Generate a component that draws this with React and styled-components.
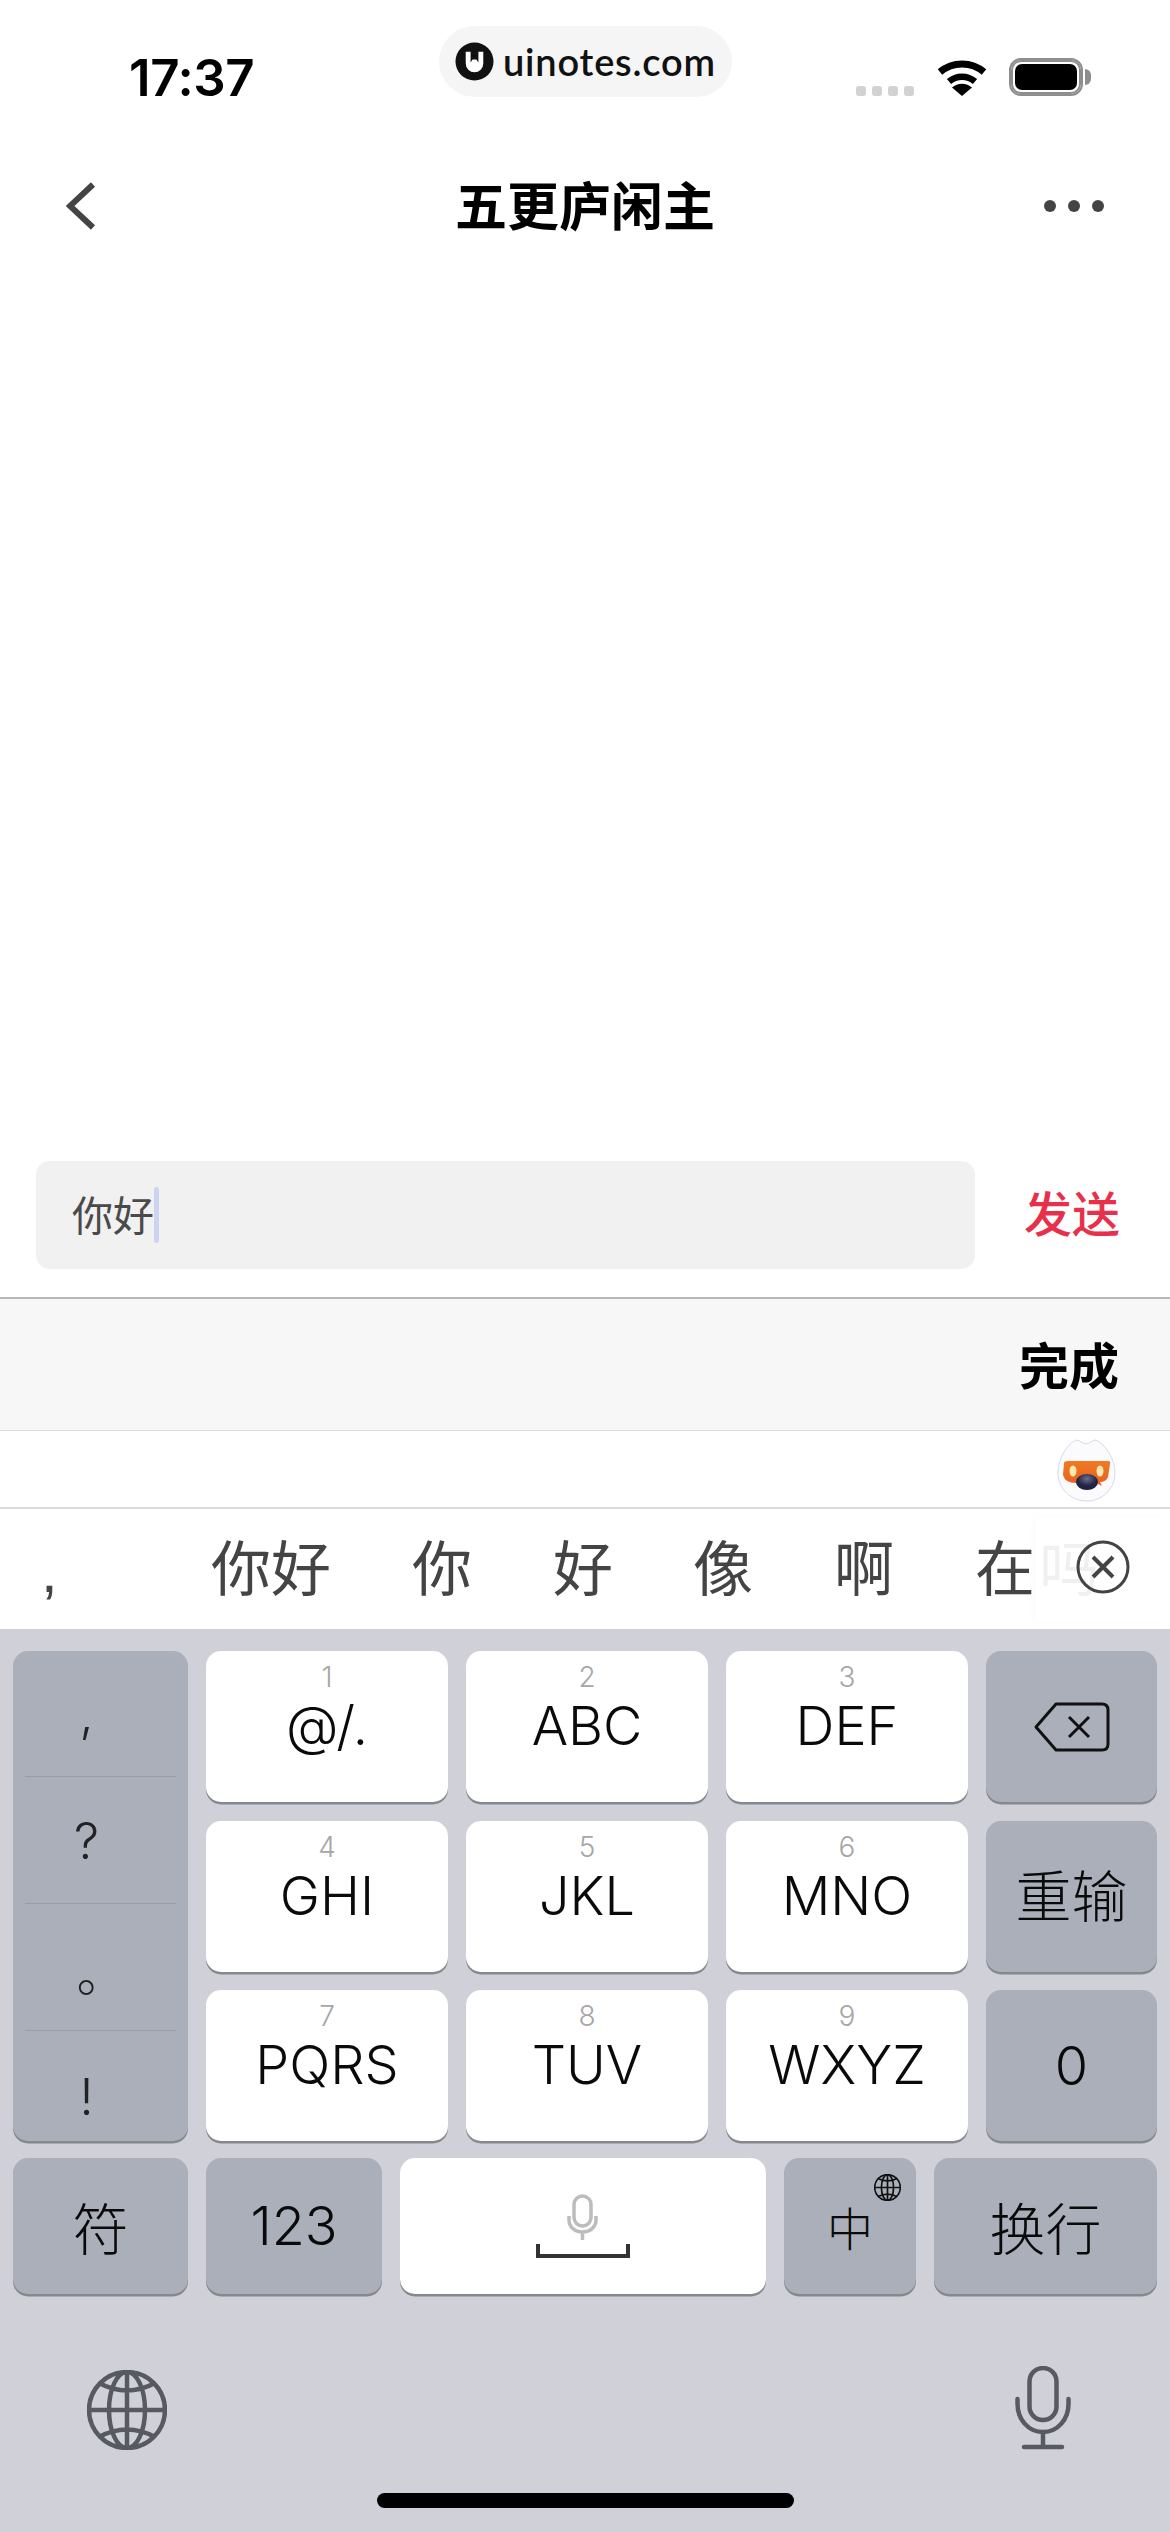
import React from "react";
import styled, { createGlobalStyle } from "styled-components";

const CJK = `"Noto Sans CJK SC", "Noto Sans", sans-serif`;
const LATIN = `Inter, "Noto Sans CJK SC", sans-serif`;

const Global = createGlobalStyle`
  html, body { margin: 0; padding: 0; background: #fff; }
  * { box-sizing: border-box; }
`;

const Page = styled.div`
  position: relative;
  width: 1170px;
  height: 2532px;
  display: flex;
  flex-direction: column;
  overflow: hidden;
  background: #fff;
  font-family: ${CJK};
`;

const StatusBar = styled.div`
  height: 150px;
  padding: 44px 87px 0 129px;
  display: flex;
  justify-content: space-between;
  align-items: flex-start;
  flex-shrink: 0;
`;
const Clock = styled.div`
  font: 600 51px/56px Inter, sans-serif;
  letter-spacing: -0.4px;
  color: #000;
  margin-top: 6px;
`;
const StatusIcons = styled.div`
  display: flex;
  align-items: flex-end;
  margin-top: 14px;
  height: 38px;
`;
const SignalDots = styled.div`
  display: flex;
  gap: 6px;
  margin-right: 23px;
`;
const SignalDot = styled.span`
  width: 10px;
  height: 10px;
  border-radius: 3px;
  background: #d2d2d2;
`;
const Battery = styled.div`
  position: relative;
  width: 74px;
  height: 38px;
  margin-left: 22px;
  padding: 4px;
  border: 2px solid #8e8e8e;
  border-radius: 12px;
  box-shadow: inset 0 0 0 2px #8e8e8e;
  &::after {
    content: "";
    position: absolute;
    right: -10px;
    top: 9px;
    width: 6px;
    height: 16px;
    border-radius: 0 6px 6px 0;
    background: #8e8e8e;
  }
`;
const BatteryFill = styled.div`
  width: 100%;
  height: 100%;
  border-radius: 7px;
  background: #000;
`;
const Watermark = styled.div`
  position: absolute;
  left: 439px;
  top: 26px;
  width: 293px;
  height: 71px;
  padding-left: 16px;
  display: flex;
  align-items: center;
  gap: 9px;
  border-radius: 36px;
  background: #f5f5f5;
`;
const WatermarkText = styled.span`
  font: 600 38px/1 Lato, sans-serif;
  color: #111;
  letter-spacing: 0.8px;
  margin-top: -2px;
`;

const Nav = styled.div`
  position: relative;
  height: 112px;
  padding: 0 66px;
  display: flex;
  align-items: center;
  justify-content: space-between;
  flex-shrink: 0;
`;
const Title = styled.div`
  position: absolute;
  left: 0;
  right: 0;
  top: 24px;
  text-align: center;
  font-size: 52px;
  font-weight: 700;
  line-height: 60px;
  color: #000;
`;
const MoreDots = styled.div`
  display: flex;
  gap: 12px;
`;
const MoreDot = styled.span`
  width: 12px;
  height: 12px;
  border-radius: 50%;
  background: #444;
`;

const Spacer = styled.div`
  flex: 1;
`;

const Composer = styled.div`
  height: 136px;
  padding: 0 50px 28px 36px;
  display: flex;
  align-items: stretch;
  justify-content: space-between;
  flex-shrink: 0;
`;
const InputBox = styled.div`
  width: 939px;
  padding-left: 36px;
  display: flex;
  align-items: center;
  border-radius: 14px;
  background: #f1f1f1;
  font-size: 41px;
  line-height: 56px;
  color: #4a4a4a;
`;
const InputText = styled.span`
  margin-top: -4px;
`;
const Caret = styled.span`
  width: 5px;
  height: 56px;
  border-radius: 3px;
  background: #ccd4f2;
`;
const Send = styled.div`
  align-self: center;
  margin-top: -8px;
  font-size: 48px;
  font-weight: 500;
  line-height: 56px;
  color: #e8304a;
`;
const DoneBar = styled.div`
  height: 134px;
  padding: 0 51px 4px 0;
  display: flex;
  align-items: center;
  justify-content: flex-end;
  border-top: 2px solid #b8b8b8;
  border-bottom: 1px solid #dcdcdc;
  background: #f7f7f7;
  font-size: 50px;
  font-weight: 700;
  color: #000;
  flex-shrink: 0;
`;
const MascotStrip = styled.div`
  height: 78px;
  display: flex;
  justify-content: flex-end;
  align-items: flex-start;
  padding: 8px 54px 0 0;
  border-bottom: 2px solid #dcdcdc;
  flex-shrink: 0;
`;
const Candidates = styled.div`
  position: relative;
  height: 120px;
  padding: 0 0 8px 41px;
  display: flex;
  align-items: center;
  flex-shrink: 0;
  font-size: 60px;
  color: #444;
  overflow: hidden;
`;
const Comma = styled.span`
  flex: none;
  width: 170px;
  font: 400 60px/60px "Liberation Sans", sans-serif;
  margin-top: 14px;
`;
const Candidate = styled.span`
  flex: none;
  margin-right: ${(p) => p.$gap}px;
  line-height: 70px;
  white-space: nowrap;
`;
const FadeCover = styled.div`
  position: absolute;
  left: 1036px;
  top: 8px;
  bottom: 8px;
  right: 0;
  background: rgba(255, 255, 255, 0.92);
  box-shadow: -3px 0 6px rgba(0, 0, 0, 0.02);
`;
const ClearIcon = styled.svg`
  position: absolute;
  left: 1076px;
  top: 31px;
`;

const Keyboard = styled.div`
  height: 903px;
  flex-shrink: 0;
  padding: 22px 13px 0;
  background: #d0d1d8;
  display: flex;
  flex-direction: column;
  position: relative;
`;
const KeyGrid = styled.div`
  display: grid;
  grid-template-columns: 175px 242px 242px 242px 171px;
  grid-template-rows: repeat(3, 151px);
  column-gap: 18px;
  row-gap: 18.5px;
`;
const Key = styled.div`
  position: relative;
  display: flex;
  flex-direction: column;
  align-items: center;
  justify-content: center;
  border-radius: 15px;
  background: ${(p) => (p.$light ? "#fff" : "#aaafb9")};
  box-shadow: 0 2.5px 0 #85888c;
  color: #0a0a0a;
  font-family: ${LATIN};
  font-weight: 300;
  font-size: ${(p) => p.$size || 54}px;
  line-height: 1;
`;
const KeyNumber = styled.span`
  position: absolute;
  top: 9px;
  left: 0;
  right: 0;
  text-align: center;
  font-size: 28px;
  line-height: 34px;
  color: #a6a6a6;
`;
const KeyLabel = styled.span`
  position: absolute;
  top: 42px;
  left: 0;
  right: 0;
  text-align: center;
  font-size: 54px;
  line-height: 66px;
`;
const PunctColumn = styled(Key)`
  grid-row: 1 / span 3;
  justify-content: flex-start;
  padding: 0 12px;
`;
const PunctCell = styled.div`
  flex: none;
  width: 100%;
  height: ${(p) => p.$h}px;
  display: flex;
  justify-content: center;
  align-items: center;
  padding: ${(p) => p.$pad || 0}px 28px 0 0;
  border-bottom: ${(p) => (p.$last ? "none" : "1.5px solid #989da7")};
  font-size: 50px;
  color: #222;
`;
const PeriodGlyph = styled.span`
  font-family: ${CJK};
  transform: translate(15px, 3px);
`;
const Row4 = styled.div`
  display: flex;
  gap: 18px;
  margin-top: 17px;
  height: 136px;
`;
const BottomKey = styled(Key)`
  flex: none;
  width: ${(p) => p.$w}px;
`;
const CjkText = styled.span`
  font-family: ${CJK};
  font-weight: 300;
  font-size: ${(p) => p.$size || 56}px;
  line-height: 66px;
  margin-top: ${(p) => p.$shift || 0}px;
`;
const SmallGlobe = styled.svg`
  position: absolute;
  right: 15px;
  top: 16px;
`;
const SpaceIcon = styled.svg`
  position: absolute;
  left: 136px;
  top: 36px;
`;
const BottomIcons = styled.div`
  margin-top: 72px;
  padding: 0 86px 0 74px;
  display: flex;
  justify-content: space-between;
  align-items: flex-end;
`;
const HomeBar = styled.div`
  position: absolute;
  left: 377px;
  bottom: 24px;
  width: 417px;
  height: 15px;
  border-radius: 8px;
  background: #000;
`;

const Logo = () => (
  <svg width="39" height="39" viewBox="-20 -20 40 40">
    <circle r="19.5" fill="#111" />
    <path d="M-9-10h5V1l2-3h4l2 3v-11h5V2a9 9 0 0 1-18 0z" fill="#fff" />
  </svg>
);
const Wifi = () => (
  <svg width="50" height="38" viewBox="0 0 50 38">
    <path d="M3 14A34 34 0 0 1 47 14" fill="none" stroke="#000" strokeWidth="7" />
    <path d="M12 23.5A20 20 0 0 1 38 23.5" fill="none" stroke="#000" strokeWidth="6.5" />
    <path d="M25 38L15 29.5A15 15 0 0 1 35 29.5Z" fill="#000" />
  </svg>
);
const Back = () => (
  <svg width="30" height="48" viewBox="0 0 30 48">
    <path d="M27 2.5L4 24L27 45.5" fill="none" stroke="#444" strokeWidth="6" />
  </svg>
);
const Mascot = () => (
  <svg width="60" height="64" viewBox="0 0 60 64">
    <defs>
      <radialGradient id="nose" cx="50%" cy="30%" r="70%">
        <stop offset="0" stopColor="#6d7088" />
        <stop offset="0.6" stopColor="#23264a" />
        <stop offset="1" stopColor="#1c1e38" />
      </radialGradient>
      <linearGradient id="band" x1="0" y1="0" x2="0" y2="1">
        <stop offset="0" stopColor="#f07a22" />
        <stop offset="1" stopColor="#e85f20" />
      </linearGradient>
    </defs>
    <path d="M20 1C24 1 27 5 30 5C33 5 36 1 40 1C50 6 59 20 59 34C59 50 46 62 31 62C15 62 2 50 2 34C2 20 10 6 20 1Z" fill="#fbfbfd" stroke="#d6d9ea" strokeWidth="1" />
    <path d="M8 24Q8 22 12 22H52Q55 22 54 25L52 38Q50 43 44 43L46 47L40 44H20Q9 44 7 36Z" fill="url(#band)" />
    <ellipse cx="17" cy="32" rx="3.5" ry="5.5" fill="#ffe9b0" />
    <ellipse cx="44" cy="32" rx="3.5" ry="5.5" fill="#ffe9b0" />
    <ellipse cx="31" cy="43" rx="11" ry="8" fill="url(#nose)" />
  </svg>
);
const Clear = () => (
  <ClearIcon width="54" height="54" viewBox="0 0 54 54">
    <circle cx="27" cy="27" r="25" fill="none" stroke="#444" strokeWidth="3" />
    <path d="M17 17L37 37M37 17L17 37" stroke="#444" strokeWidth="4" />
  </ClearIcon>
);
const Backspace = () => (
  <svg width="76" height="50" viewBox="0 0 76 50">
    <path d="M22 2H68Q74 2 74 8V42Q74 48 68 48H22L2 25Z" fill="none" stroke="#111" strokeWidth="3" strokeLinejoin="round" />
    <path d="M35 15L55 35M55 15L35 35" stroke="#111" strokeWidth="3" />
  </svg>
);
const GlobeShape = ({ stroke, width }) => (
  <g fill="none" stroke={stroke} strokeWidth={width}>
    <ellipse cx="40" cy="40" rx="38" ry="38" />
    <ellipse cx="40" cy="40" rx="18" ry="38" />
    <path d="M40 2V78M2 40H78M12 13Q40 28 68 13M12 67Q40 52 68 67" />
  </g>
);
const BigMic = () => (
  <svg width="56" height="84" viewBox="0 0 56 84">
    <rect x="14.5" y="2" width="27" height="52" rx="13.5" fill="none" stroke="#575a60" strokeWidth="4.5" />
    <path d="M2.5 33V38C2.5 53 13 66 28 66C43 66 53.5 53 53.5 38V33M28 66V80M9 81H47" fill="none" stroke="#575a60" strokeWidth="4.5" strokeLinecap="round" />
  </svg>
);
const SpaceGlyph = () => (
  <SpaceIcon width="94" height="66" viewBox="0 0 94 66">
    <rect x="38" y="2" width="17" height="30" rx="8.5" fill="none" stroke="#bcbcbc" strokeWidth="3.5" />
    <path d="M33 22V26C33 33 39 38 46.5 38C54 38 60 33 60 26V22M46.5 38V46" fill="none" stroke="#bcbcbc" strokeWidth="3.5" />
    <path d="M2 50V62H92V50" fill="none" stroke="#333" strokeWidth="4" />
  </SpaceIcon>
);

const letterKeys = [
  ["1", "@/."], ["2", "ABC"], ["3", "DEF"],
  ["4", "GHI"], ["5", "JKL"], ["6", "MNO"],
  ["7", "PQRS"], ["8", "TUV"], ["9", "WXYZ"],
];
const candidates = [
  ["你好", 81], ["你", 81], ["好", 80], ["像", 81], ["啊", 81], ["在", 4], ["吗", 0],
];

export default function App() {
  return (
    <Page>
      <Global />
      <StatusBar>
        <Clock>17:37</Clock>
        <StatusIcons>
          <SignalDots>
            {[0, 1, 2, 3].map((i) => <SignalDot key={i} />)}
          </SignalDots>
          <Wifi />
          <Battery><BatteryFill /></Battery>
        </StatusIcons>
      </StatusBar>
      <Watermark><Logo /><WatermarkText>uinotes.com</WatermarkText></Watermark>
      <Nav>
        <Back />
        <Title>五更庐闲主</Title>
        <MoreDots>{[0, 1, 2].map((i) => <MoreDot key={i} />)}</MoreDots>
      </Nav>
      <Spacer />
      <Composer>
        <InputBox><InputText>你好</InputText><Caret /></InputBox>
        <Send>发送</Send>
      </Composer>
      <DoneBar>完成</DoneBar>
      <MascotStrip><Mascot /></MascotStrip>
      <Candidates>
        <Comma>,</Comma>
        {candidates.map(([c, gap]) => <Candidate key={c} $gap={gap}>{c}</Candidate>)}
        <FadeCover />
        <Clear />
      </Candidates>
      <Keyboard>
        <KeyGrid>
          <PunctColumn>
            <PunctCell $h={126}>,</PunctCell>
            <PunctCell $h={127} $pad={2}>?</PunctCell>
            <PunctCell $h={127}><PeriodGlyph>。</PeriodGlyph></PunctCell>
            <PunctCell $h={112} $last $pad={20}>!</PunctCell>
          </PunctColumn>
          {letterKeys.slice(0, 3).map(([n, l]) => (
            <Key $light key={n}><KeyNumber>{n}</KeyNumber><KeyLabel>{l}</KeyLabel></Key>
          ))}
          <Key><Backspace /></Key>
          {letterKeys.slice(3, 6).map(([n, l]) => (
            <Key $light key={n}><KeyNumber>{n}</KeyNumber><KeyLabel>{l}</KeyLabel></Key>
          ))}
          <Key><CjkText $shift={-6}>重输</CjkText></Key>
          {letterKeys.slice(6).map(([n, l]) => (
            <Key $light key={n}><KeyNumber>{n}</KeyNumber><KeyLabel>{l}</KeyLabel></Key>
          ))}
          <Key>0</Key>
        </KeyGrid>
        <Row4>
          <BottomKey $w={175}><CjkText>符</CjkText></BottomKey>
          <BottomKey $w={176}>123</BottomKey>
          <BottomKey $w={366} $light><SpaceGlyph /></BottomKey>
          <BottomKey $w={132}>
            <CjkText $size={46}>中</CjkText>
            <SmallGlobe width="27" height="27" viewBox="0 0 80 80">
              <GlobeShape stroke="#111" width="5" />
            </SmallGlobe>
          </BottomKey>
          <BottomKey $w={223}><CjkText>换行</CjkText></BottomKey>
        </Row4>
        <BottomIcons>
          <svg width="80" height="80" viewBox="0 0 80 80">
            <GlobeShape stroke="#575a60" width="4.5" />
          </svg>
          <BigMic />
        </BottomIcons>
        <HomeBar />
      </Keyboard>
    </Page>
  );
}
